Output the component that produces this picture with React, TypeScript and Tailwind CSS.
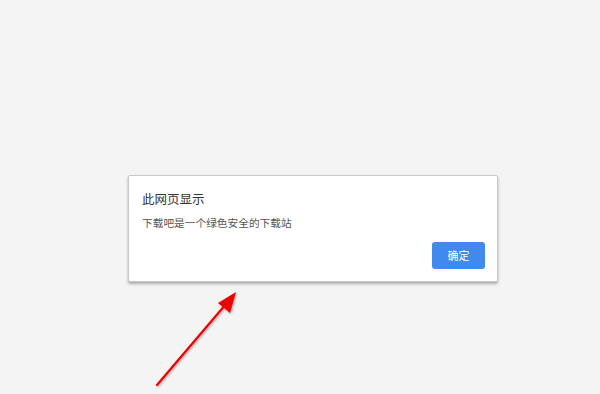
import React from "react";

export default function App() {
  return (
    <div
      className="relative h-[394px] w-[600px] overflow-hidden bg-[#f4f4f4]"
      style={{ fontFamily: '"Noto Sans CJK SC", "Noto Sans", sans-serif' }}
    >
      <div className="pl-[128px] pt-[175px]">
        <div className="flex h-[107px] w-[370px] flex-col rounded-[2px] border border-[#c8c8c8] bg-white shadow-[0_2px_3px_rgba(0,0,0,0.3)]">
          <div className="pl-[13px] pt-[14px] text-[12.5px] leading-[18px] text-[#333]">此网页显示</div>
          <div className="pl-[13px] pt-[7px] text-[10.7px] leading-[16px] text-[#555]">下载吧是一个绿色安全的下载站</div>
          <div className="flex flex-1 items-end justify-end pb-[12px] pr-[12px]">
            <button className="flex h-[27px] w-[53px] items-center justify-center rounded-[3px] bg-[#4189ec] text-[11px] text-white">
              确定
            </button>
          </div>
        </div>
      </div>
      <svg className="absolute left-0 top-0" width="600" height="394" viewBox="0 0 600 394">
        <defs>
          <filter id="sh" x="-20%" y="-20%" width="140%" height="140%">
            <feDropShadow dx="1" dy="1" stdDeviation="1" floodColor="#000" floodOpacity="0.35" />
          </filter>
        </defs>
        <g filter="url(#sh)">
          <line x1="157" y1="385" x2="226" y2="304" stroke="#ee0000" strokeWidth="2.2" strokeLinecap="round" />
          <polygon points="236,292 230,313 218,303" fill="#ee0000" />
        </g>
      </svg>
    </div>
  );
}
